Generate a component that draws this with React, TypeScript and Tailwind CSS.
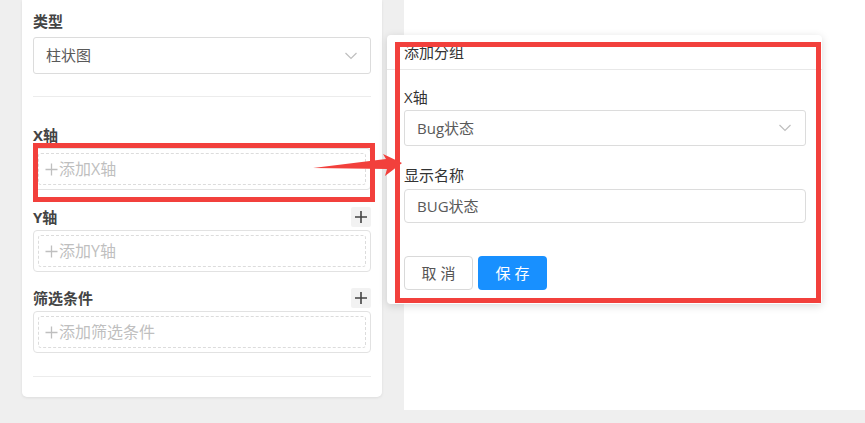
import React from 'react';

const font = { fontFamily: '"Open Sans", "Noto Sans CJK SC", sans-serif' };

const Chevron: React.FC = () => (
  <svg width="12" height="8" viewBox="0 0 12 8" className="text-[#bfbfbf]">
    <polyline points="0.5,1 6,6.5 11.5,1" fill="none" stroke="currentColor" strokeWidth="1.2" />
  </svg>
);

const PlusBtn: React.FC = () => (
  <button className="w-[20px] h-[20px] bg-[#f2f2f2] rounded-[2px] flex items-center justify-center">
    <svg width="14" height="14" viewBox="0 0 14 14">
      <path d="M7 1v12M1 7h12" stroke="#444" strokeWidth="1.6" />
    </svg>
  </button>
);

const DropBox: React.FC<{ text: string }> = ({ text }) => (
  <div className="mt-[2px] h-[42px] border border-[#e2e2e2] rounded-[4px] p-[4px]">
    <div className="h-full border border-dashed border-[#dcdcdc] rounded-[3px] pl-[6px] flex items-center text-[16px] text-[#bfbfbf]">
      <svg width="13" height="13" viewBox="0 0 13 13" className="mr-[1px]">
        <path d="M6.5 0.5v12M0.5 6.5h12" stroke="#bfbfbf" strokeWidth="1.3" />
      </svg>
      {text}
    </div>
  </div>
);

const SectionHead: React.FC<{ title: string; plus?: boolean }> = ({ title, plus }) => (
  <div className="h-[22px] flex items-center justify-between">
    <span className="text-[15px] font-bold text-[#444]">{title}</span>
    {plus && <PlusBtn />}
  </div>
);

const App: React.FC = () => {
  return (
    <div className="relative w-[865px] h-[423px] bg-[#efefef] flex overflow-hidden" style={font}>
      {/* left config card */}
      <div className="ml-[22px] w-[360px] h-[397px] bg-white rounded-b-[5px] shadow-[0_1px_3px_rgba(0,0,0,0.08)] px-[11px] pt-[10px]">
        <div className="h-[22px] leading-[22px] text-[15px] font-bold text-[#444]">类型</div>
        <div className="mt-[5px] h-[37px] border border-[#dcdcdc] rounded-[3px] pl-[12px] pr-[13px] flex items-center justify-between">
          <span className="text-[15px] text-[#595959]">柱状图</span>
          <Chevron />
        </div>
        <div className="mt-[22px] border-t border-[#ececec]" />

        <div className="mt-[27px]">
          <SectionHead title="X轴" />
          <DropBox text="添加X轴" />
        </div>
        <div className="mt-[16px]">
          <SectionHead title="Y轴" plus />
          <DropBox text="添加Y轴" />
        </div>
        <div className="mt-[15px]">
          <SectionHead title="筛选条件" plus />
          <DropBox text="添加筛选条件" />
        </div>
        <div className="mt-[23px] border-t border-[#ececec]" />
      </div>

      {/* right panel */}
      <div className="ml-[22px] w-[461px] h-[410px] bg-white" />

      {/* popover */}
      <div className="absolute left-[387px] top-[35px] w-[435px] h-[269px] bg-white rounded-[4px] shadow-[0_2px_8px_rgba(0,0,0,0.15)]">
        <div className="h-[35px] border-b border-[#e8e8e8] pl-[17px] flex items-center text-[15px] text-[#333]">添加分组</div>
        <div className="pl-[17px] pr-[16px]">
          <div className="mt-[16px] h-[22px] leading-[22px] text-[15px] text-[#333]">X轴</div>
          <div className="mt-[2px] h-[36px] border border-[#dcdcdc] rounded-[3px] pl-[12px] pr-[14px] flex items-center justify-between">
            <span className="text-[15px] text-[#595959]">Bug状态</span>
            <Chevron />
          </div>
          <div className="mt-[18px] h-[22px] leading-[22px] text-[15px] text-[#333]">显示名称</div>
          <div className="mt-[3px] h-[34px] border border-[#dcdcdc] rounded-[4px] pl-[12px] flex items-center text-[15px] text-[#595959]">
            BUG状态
          </div>
          <div className="mt-[33px] flex gap-[5px]">
            <button className="w-[69px] h-[34px] border border-[#d9d9d9] rounded-[4px] text-[15px] text-[#555] tracking-[4px] pl-[4px]">取消</button>
            <button className="w-[69px] h-[34px] bg-[#1890ff] rounded-[4px] text-[15px] text-white tracking-[4px] pl-[4px]">保存</button>
          </div>
        </div>
      </div>

      {/* annotations */}
      <div className="absolute left-[33px] top-[143px] w-[342px] h-[59px] border-[5px] border-[#f2403c]" />
      <div className="absolute left-[395px] top-[42px] w-[426px] h-[261px] border-[5px] border-[#f2403c]" />
      <svg className="absolute left-[310px] top-[150px]" width="95" height="30" viewBox="0 0 95 30">
        <polygon points="3,18 76,9 73,4 92,13 75,26 77,19" fill="#f2403c" />
      </svg>
    </div>
  );
};

export default App;
